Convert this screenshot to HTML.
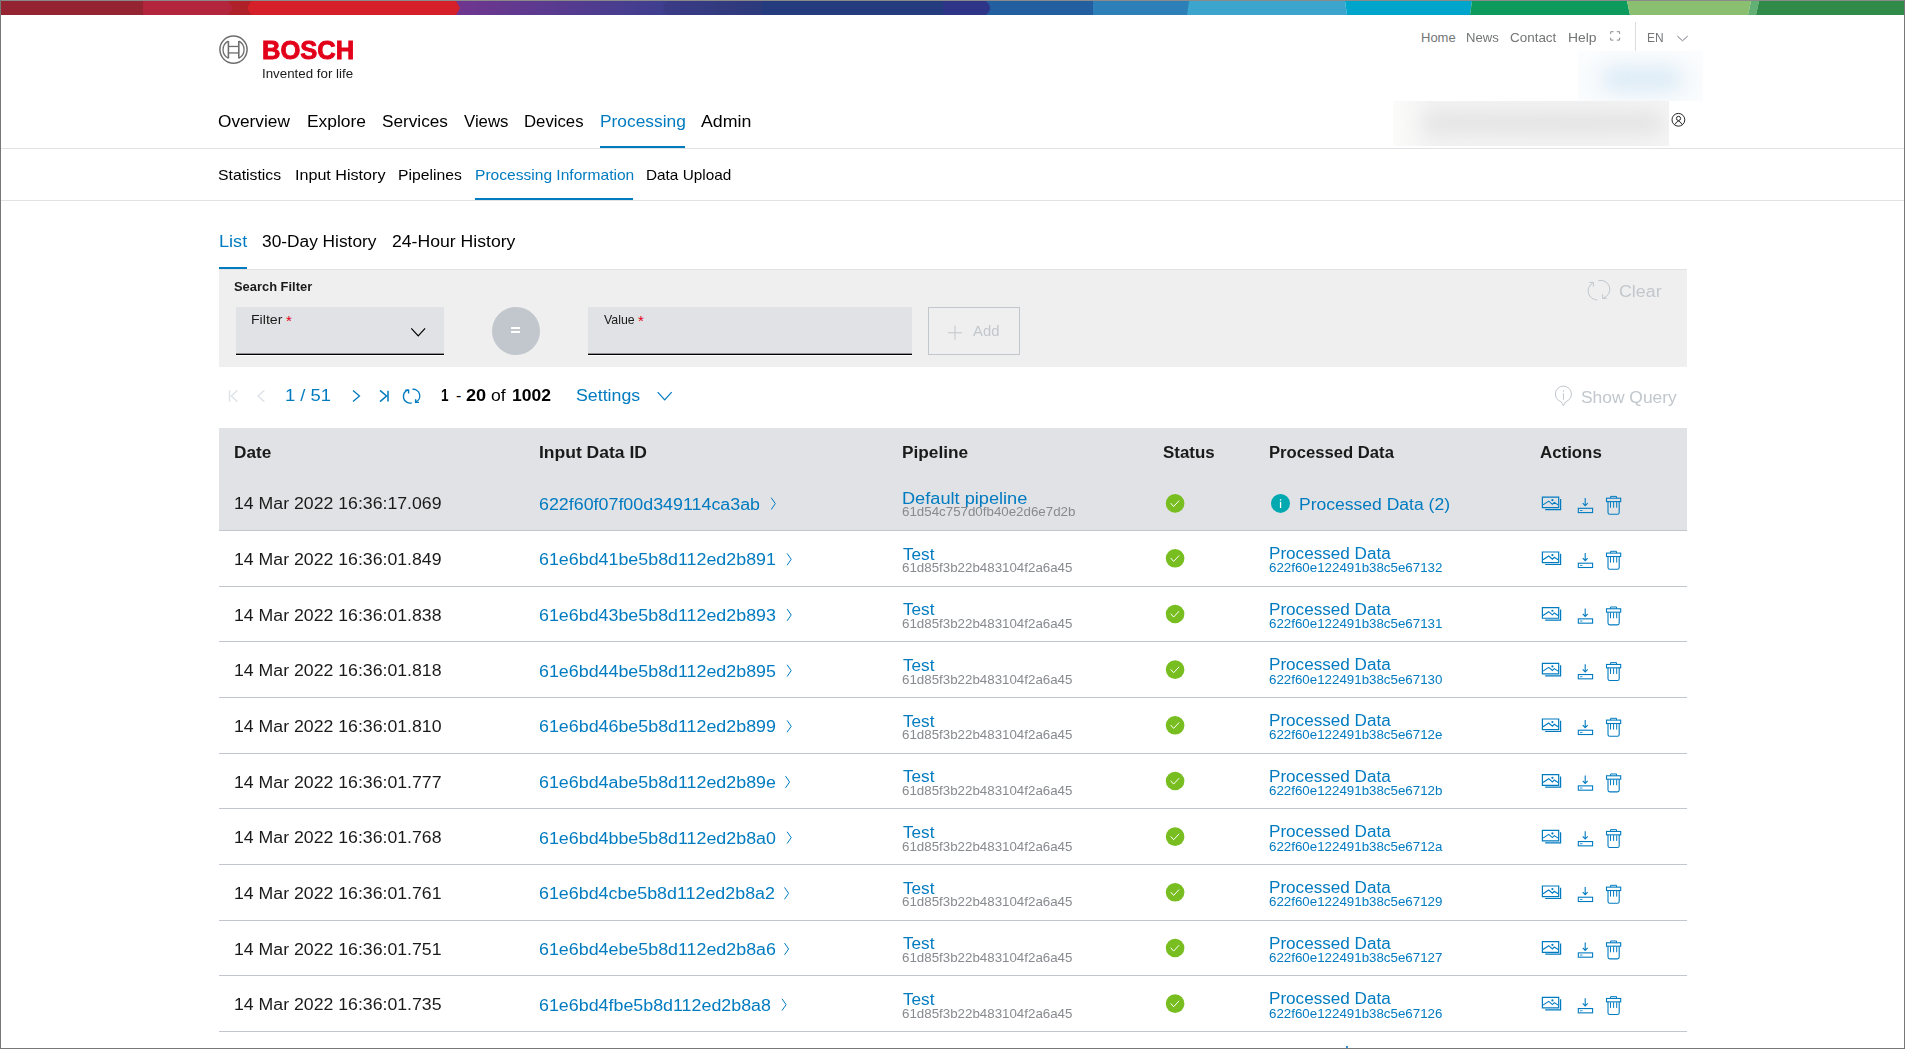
<!DOCTYPE html>
<html><head><meta charset="utf-8">
<style>
html,body{margin:0;padding:0;}html{overflow:hidden;background:#fff;}
body{width:1905px;height:1049px;position:relative;overflow:hidden;background:#fff;font-family:"Liberation Sans",sans-serif;}
.t{position:absolute;white-space:nowrap;font-family:"Liberation Sans",sans-serif;transform-origin:0 0;}
.b{position:absolute;}
svg{position:absolute;overflow:visible;}
</style></head><body>
<!-- color bar -->
<svg style="left:0;top:0" width="1905" height="16" viewBox="0 0 1905 16">
<rect x="0" y="0" width="1905" height="1" fill="#8a8a8a"/>
<defs>
<linearGradient id="gp" x1="0" x2="1"><stop offset="0" stop-color="#71368f"/><stop offset="1" stop-color="#3d3f8f"/></linearGradient>
<linearGradient id="gp2" x1="0" x2="1"><stop offset="0" stop-color="#3b3b86"/><stop offset="1" stop-color="#2c3a7a"/></linearGradient>
</defs>
<g transform="translate(0,1)">
<rect x="0" y="0" width="145" height="14" fill="#952432"/>
<rect x="143" y="0" width="120" height="14" fill="#b02029"/>
<path d="M143 0 H228 L233 7 L228 14 H143 Z" fill="#b2253c"/>
<rect x="450" y="0" width="220" height="14" fill="url(#gp)"/>
<path d="M252 0 Q244 7 252 14 H456 L460 7 L456 0 Z" fill="#d62029"/>
<rect x="760" y="0" width="185" height="14" fill="#243b7e"/>
<path d="M667 0 Q659 7 667 14 H762 V0 Z" fill="url(#gp2)"/>
<rect x="943" y="0" width="151" height="14" fill="#235ea0"/>
<path d="M943 0 H986 Q994 7 986 14 H943 Z" fill="#2e3487"/>
<rect x="1093" y="0" width="96" height="14" fill="#2d7fb7"/>
<path d="M1189 0 H1345 L1347 14 H1187 Z" fill="#3ba5cd"/>
<path d="M1345 0 H1472 L1470 14 H1347 Z" fill="#00a5cc"/>
<path d="M1472 0 H1627 L1630 14 H1470 Z" fill="#0d9b5d"/>
<path d="M1627 0 H1751 L1748 14 H1630 Z" fill="#8bbf70"/>
<path d="M1751 0 H1759 L1756 14 H1748 Z" fill="#62b073"/>
<path d="M1759 0 H1905 V14 H1756 Z" fill="#2f8b47"/>
</g>
</svg>
<!-- page border -->
<div class="b" style="left:0;top:0;width:1px;height:1049px;background:#777"></div>
<div class="b" style="left:1904px;top:0;width:1px;height:1049px;background:#777"></div>
<div class="b" style="left:0;top:1048px;width:1905px;height:1px;background:#777"></div>

<!-- bosch logo -->
<svg style="left:215px;top:31px" width="40" height="38" viewBox="215 31 40 38">
<circle cx="233.5" cy="49.6" r="13.6" fill="none" stroke="#6e6e6e" stroke-width="1.5"/>
<path d="M228.3 41.2 A9.5 9.5 0 0 0 228.3 58.2" fill="none" stroke="#6e6e6e" stroke-width="1.3"/>
<path d="M238.8 41.2 A9.5 9.5 0 0 1 238.8 58.2" fill="none" stroke="#6e6e6e" stroke-width="1.3"/>
<rect x="227.6" y="41" width="1.6" height="17.4" fill="#6e6e6e"/>
<rect x="238" y="41" width="1.6" height="17.4" fill="#6e6e6e"/>
<rect x="228.5" y="45.8" width="10" height="1.3" fill="#6e6e6e"/>
<rect x="228.5" y="52.3" width="10" height="1.3" fill="#6e6e6e"/>
</svg>

<!-- util nav icons -->
<svg style="left:1605px;top:26px" width="20" height="20" viewBox="1605 26 20 20">
<path d="M1610.7 34 V31.7 H1613.5 M1616.8 31.7 H1619.6 V34 M1619.6 37.6 V40.1 H1616.8 M1613.5 40.1 H1610.7 V37.6" fill="none" stroke="#707070" stroke-width="0.8"/>
</svg>
<div class="b" style="left:1635px;top:22px;width:1px;height:29px;background:#dcdcdc"></div>
<svg style="left:1672px;top:30px" width="20" height="16" viewBox="1672 30 20 16">
<path d="M1677.3 36 L1682.5 40.8 L1687.7 36" fill="none" stroke="#71767c" stroke-width="1"/>
</svg>

<!-- blurred blobs -->
<div class="b" style="left:1578px;top:51px;width:125px;height:50px;background:radial-gradient(ellipse at 50% 60%,#f3f8fc 0%,#f8fbfd 60%,#fcfdfe 100%);overflow:hidden">
  <div class="b" style="left:25px;top:17px;width:78px;height:22px;background:#dcebf6;filter:blur(9px);border-radius:11px"></div>
</div>
<div class="b" style="left:1393px;top:101px;width:276px;height:45px;background:linear-gradient(to right,#fbfbfa 0%,#f3f3f3 14%,#f2f2f2 70%,#f4f4f4 100%);overflow:hidden">
  <div class="b" style="left:30px;top:12px;width:240px;height:20px;background:#e3e3e3;filter:blur(9px);border-radius:10px"></div>
</div>
<svg style="left:1668px;top:110px" width="22" height="22" viewBox="1668 110 22 22">
<circle cx="1678.4" cy="119.8" r="6.4" fill="none" stroke="#111" stroke-width="0.9"/>
<circle cx="1678.5" cy="118.4" r="2.1" fill="none" stroke="#111" stroke-width="0.9"/>
<path d="M1675 124.4 Q1676.5 121.4 1678.5 121.1 Q1680.5 121.4 1682 124.4" fill="none" stroke="#111" stroke-width="0.9"/>
</svg>

<!-- nav lines -->
<div class="b" style="left:600px;top:146px;width:85px;height:2px;background:#007bc0"></div>
<div class="b" style="left:1px;top:148px;width:1903px;height:1px;background:#e0e2e5"></div>
<div class="b" style="left:475px;top:198px;width:158px;height:2px;background:#007bc0"></div>
<div class="b" style="left:1px;top:200px;width:1903px;height:1px;background:#e0e2e5"></div>

<!-- tabs underline -->
<div class="b" style="left:219px;top:267px;width:28px;height:2px;background:#007bc0"></div>

<!-- filter panel -->
<div class="b" style="left:219px;top:269px;width:1468px;height:98px;background:#efefef;border-top:1px solid #e2e2e2;box-sizing:border-box"></div>
<div class="b" style="left:236px;top:307px;width:208px;height:46px;background:#e0e2e5"></div>
<svg style="left:0;top:0" width="1905" height="400" viewBox="0 0 1905 400"><rect x="236" y="353" width="208" height="0.6" fill="#eef0f3"/><rect x="236" y="353.6" width="208" height="1.5" fill="#000"/><rect x="236" y="355.1" width="208" height="1" fill="#fff"/><rect x="588" y="353" width="324" height="0.6" fill="#eef0f3"/><rect x="588" y="353.6" width="324" height="1.5" fill="#000"/><rect x="588" y="355.1" width="324" height="1" fill="#fff"/></svg>
<svg style="left:405px;top:322px" width="26" height="20" viewBox="405 322 26 20">
<path d="M411.3 328.3 L418.2 335.8 L425.1 328.3" fill="none" stroke="#000" stroke-width="1.2"/>
</svg>
<div class="b" style="left:492px;top:307px;width:48px;height:48px;border-radius:50%;background:#c1c7cc"></div>
<div class="b" style="left:510.5px;top:327px;width:9.4px;height:2px;background:#fff"></div>
<div class="b" style="left:510.5px;top:331px;width:9.4px;height:2px;background:#fff"></div>
<div class="b" style="left:588px;top:307px;width:324px;height:46px;background:#e0e2e5"></div>
<div class="b" style="left:928px;top:307px;width:92px;height:48px;border:1px solid #c1c7cc;box-sizing:border-box"></div>
<svg style="left:944px;top:322px" width="22" height="22" viewBox="944 322 22 22">
<path d="M948 332.8 H962 M955 325.8 V339.8" fill="none" stroke="#c1c7cc" stroke-width="1"/>
</svg>
<div class="t" style="left:286px;top:313px;font-size:15px;line-height:15px;color:#e20015">*</div>
<div class="t" style="left:638px;top:313px;font-size:15px;line-height:15px;color:#e20015">*</div>
<!-- clear icon -->
<svg style="left:1584px;top:276px" width="28" height="28" viewBox="1584 276 28 28">
<path d="M1597.4 299.9 A9 9 0 0 1 1592.8 283" fill="none" stroke="#c1c7cc" stroke-width="1"/>
<path d="M1589.3 282.4 H1593.4 V286.6" fill="none" stroke="#c1c7cc" stroke-width="1"/>
<path d="M1598.3 280.7 A9 9 0 0 1 1603.3 298" fill="none" stroke="#c1c7cc" stroke-width="1"/>
<path d="M1602.6 294.2 V298.4 H1606.8" fill="none" stroke="#c1c7cc" stroke-width="1"/>
</svg>
<!-- show query icon -->
<svg style="left:1550px;top:382px" width="28" height="28" viewBox="1550 382 28 28">
<path d="M1557.7 399.7 Q1561.8 401.2 1563.4 405.6 Q1565 401.2 1569.1 399.7 A8 8 0 1 0 1557.7 399.7 Z" fill="none" stroke="#c1c7cc" stroke-width="1" stroke-linejoin="round"/>
<path d="M1563.4 390.2 V391.6 M1563.4 393.2 V399.8" fill="none" stroke="#c1c7cc" stroke-width="1"/>
</svg>

<!-- pagination icons -->
<svg style="left:222px;top:384px" width="210" height="24" viewBox="222 384 210 24">
<path d="M229.5 390.3 V401.7 M237.5 390.3 L231.3 396 L237.5 401.7" fill="none" stroke="#dde1e6" stroke-width="1.3"/>
<path d="M264.4 390.3 L258 396 L264.4 401.7" fill="none" stroke="#dde1e6" stroke-width="1.3"/>
<path d="M353 390.4 L359.5 396 L353 401.6" fill="none" stroke="#007bc0" stroke-width="1.3"/>
<path d="M380 390.4 L386.5 396 L380 401.6 M388 390.8 V401.6" fill="none" stroke="#007bc0" stroke-width="1.5"/>
<path d="M408.4 389.8 A6.6 6.6 0 0 0 411.8 402.9" fill="none" stroke="#007bc0" stroke-width="1.4"/>
<path d="M405.3 390.3 H408.6 V393.6" fill="none" stroke="#007bc0" stroke-width="1.4"/>
<path d="M412.5 389.3 A6.6 6.6 0 0 1 415.6 402" fill="none" stroke="#007bc0" stroke-width="1.4"/>
<path d="M415.6 399.2 V402.4 H419" fill="none" stroke="#007bc0" stroke-width="1.4"/>
</svg>
<svg style="left:650px;top:384px" width="28" height="24" viewBox="650 384 28 24">
<path d="M657.7 392.2 L664.7 399.8 L671.7 392.2" fill="none" stroke="#007bc0" stroke-width="1.2"/>
</svg>

<!-- table -->
<div class="b" style="left:219px;top:428px;width:1468px;height:102.5px;background:#e0e2e5"></div>
<div class="b" style="left:219px;top:530.00px;width:1468px;height:1px;background:#c1c7cc"></div>
<div class="b" style="left:219px;top:585.67px;width:1468px;height:1px;background:#c1c7cc"></div>
<div class="b" style="left:219px;top:641.34px;width:1468px;height:1px;background:#c1c7cc"></div>
<div class="b" style="left:219px;top:697.01px;width:1468px;height:1px;background:#c1c7cc"></div>
<div class="b" style="left:219px;top:752.68px;width:1468px;height:1px;background:#c1c7cc"></div>
<div class="b" style="left:219px;top:808.35px;width:1468px;height:1px;background:#c1c7cc"></div>
<div class="b" style="left:219px;top:864.02px;width:1468px;height:1px;background:#c1c7cc"></div>
<div class="b" style="left:219px;top:919.69px;width:1468px;height:1px;background:#c1c7cc"></div>
<div class="b" style="left:219px;top:975.36px;width:1468px;height:1px;background:#c1c7cc"></div>
<div class="b" style="left:219px;top:1031.03px;width:1468px;height:1px;background:#c1c7cc"></div>
<svg style="left:0;top:0" width="1905" height="1049" viewBox="0 0 1905 1049">
<path d="M771.20 497.70 L775.30 503.60 L771.20 509.50" fill="none" stroke="#007bc0" stroke-width="1"/>
<circle cx="1175.1" cy="503.40" r="9.3" fill="#78be20"/>
<path d="M1170.7 503.10 L1173.6 506.50 L1179.1 500.60" fill="none" stroke="#fff" stroke-width="1"/>
<circle cx="1280.5" cy="503.40" r="9.5" fill="#00a8b0"/><rect x="1279.9" y="499.20" width="1.3" height="1.4" fill="#fff"/><rect x="1279.9" y="501.80" width="1.3" height="6.2" fill="#fff"/>
<path d="M1542.4 497.10 H1558.7 V507.70 H1542.4 Z" fill="none" stroke="#007bc0" stroke-width="1.2"/><path d="M1560.6 498.90 V509.60 H1545.2" fill="none" stroke="#007bc0" stroke-width="1.2"/><path d="M1543 504.90 L1548.7 501.10 L1552.4 504.30 L1554.3 502.40 L1558.1 504.90" fill="none" stroke="#007bc0" stroke-width="1.1"/><circle cx="1552.4" cy="500.20" r="1.1" fill="#007bc0"/><path d="M1585.2 498.00 V505.50 M1582.7 503.20 L1585.2 505.80 L1587.7 503.20" fill="none" stroke="#007bc0" stroke-width="1.1"/><rect x="1578.3" y="508.30" width="14.3" height="4.3" fill="none" stroke="#007bc0" stroke-width="1.1"/><path d="M1580 510.50 H1582.5" stroke="#007bc0" stroke-width="0.8"/><rect x="1606.5" y="498.20" width="14.2" height="3.4" fill="none" stroke="#007bc0" stroke-width="1.1"/><path d="M1610.6 498.20 V496.40 H1616.5 V498.20" fill="none" stroke="#007bc0" stroke-width="1"/><path d="M1608 501.60 V512.50 Q1608 514.30 1609.8 514.30 H1617.4 Q1619.2 514.30 1619.2 512.50 V501.60" fill="none" stroke="#007bc0" stroke-width="1.1"/><path d="M1610.5 502.00 V507.70 M1613.6 502.00 V507.70 M1616.7 502.00 V507.70" fill="none" stroke="#007bc0" stroke-width="1"/>
<path d="M787.10 553.40 L791.20 559.30 L787.10 565.20" fill="none" stroke="#007bc0" stroke-width="1"/>
<circle cx="1175.1" cy="558.30" r="9.3" fill="#78be20"/>
<path d="M1170.7 558.00 L1173.6 561.40 L1179.1 555.50" fill="none" stroke="#fff" stroke-width="1"/>
<path d="M1542.4 552.00 H1558.7 V562.60 H1542.4 Z" fill="none" stroke="#007bc0" stroke-width="1.2"/><path d="M1560.6 553.80 V564.50 H1545.2" fill="none" stroke="#007bc0" stroke-width="1.2"/><path d="M1543 559.80 L1548.7 556.00 L1552.4 559.20 L1554.3 557.30 L1558.1 559.80" fill="none" stroke="#007bc0" stroke-width="1.1"/><circle cx="1552.4" cy="555.10" r="1.1" fill="#007bc0"/><path d="M1585.2 552.90 V560.40 M1582.7 558.10 L1585.2 560.70 L1587.7 558.10" fill="none" stroke="#007bc0" stroke-width="1.1"/><rect x="1578.3" y="563.20" width="14.3" height="4.3" fill="none" stroke="#007bc0" stroke-width="1.1"/><path d="M1580 565.40 H1582.5" stroke="#007bc0" stroke-width="0.8"/><rect x="1606.5" y="553.10" width="14.2" height="3.4" fill="none" stroke="#007bc0" stroke-width="1.1"/><path d="M1610.6 553.10 V551.30 H1616.5 V553.10" fill="none" stroke="#007bc0" stroke-width="1"/><path d="M1608 556.50 V567.40 Q1608 569.20 1609.8 569.20 H1617.4 Q1619.2 569.20 1619.2 567.40 V556.50" fill="none" stroke="#007bc0" stroke-width="1.1"/><path d="M1610.5 556.90 V562.60 M1613.6 556.90 V562.60 M1616.7 556.90 V562.60" fill="none" stroke="#007bc0" stroke-width="1"/>
<path d="M787.10 609.07 L791.20 614.97 L787.10 620.87" fill="none" stroke="#007bc0" stroke-width="1"/>
<circle cx="1175.1" cy="613.97" r="9.3" fill="#78be20"/>
<path d="M1170.7 613.67 L1173.6 617.07 L1179.1 611.17" fill="none" stroke="#fff" stroke-width="1"/>
<path d="M1542.4 607.67 H1558.7 V618.27 H1542.4 Z" fill="none" stroke="#007bc0" stroke-width="1.2"/><path d="M1560.6 609.47 V620.17 H1545.2" fill="none" stroke="#007bc0" stroke-width="1.2"/><path d="M1543 615.47 L1548.7 611.67 L1552.4 614.87 L1554.3 612.97 L1558.1 615.47" fill="none" stroke="#007bc0" stroke-width="1.1"/><circle cx="1552.4" cy="610.77" r="1.1" fill="#007bc0"/><path d="M1585.2 608.57 V616.07 M1582.7 613.77 L1585.2 616.37 L1587.7 613.77" fill="none" stroke="#007bc0" stroke-width="1.1"/><rect x="1578.3" y="618.87" width="14.3" height="4.3" fill="none" stroke="#007bc0" stroke-width="1.1"/><path d="M1580 621.07 H1582.5" stroke="#007bc0" stroke-width="0.8"/><rect x="1606.5" y="608.77" width="14.2" height="3.4" fill="none" stroke="#007bc0" stroke-width="1.1"/><path d="M1610.6 608.77 V606.97 H1616.5 V608.77" fill="none" stroke="#007bc0" stroke-width="1"/><path d="M1608 612.17 V623.07 Q1608 624.87 1609.8 624.87 H1617.4 Q1619.2 624.87 1619.2 623.07 V612.17" fill="none" stroke="#007bc0" stroke-width="1.1"/><path d="M1610.5 612.57 V618.27 M1613.6 612.57 V618.27 M1616.7 612.57 V618.27" fill="none" stroke="#007bc0" stroke-width="1"/>
<path d="M787.10 664.74 L791.20 670.64 L787.10 676.54" fill="none" stroke="#007bc0" stroke-width="1"/>
<circle cx="1175.1" cy="669.64" r="9.3" fill="#78be20"/>
<path d="M1170.7 669.34 L1173.6 672.74 L1179.1 666.84" fill="none" stroke="#fff" stroke-width="1"/>
<path d="M1542.4 663.34 H1558.7 V673.94 H1542.4 Z" fill="none" stroke="#007bc0" stroke-width="1.2"/><path d="M1560.6 665.14 V675.84 H1545.2" fill="none" stroke="#007bc0" stroke-width="1.2"/><path d="M1543 671.14 L1548.7 667.34 L1552.4 670.54 L1554.3 668.64 L1558.1 671.14" fill="none" stroke="#007bc0" stroke-width="1.1"/><circle cx="1552.4" cy="666.44" r="1.1" fill="#007bc0"/><path d="M1585.2 664.24 V671.74 M1582.7 669.44 L1585.2 672.04 L1587.7 669.44" fill="none" stroke="#007bc0" stroke-width="1.1"/><rect x="1578.3" y="674.54" width="14.3" height="4.3" fill="none" stroke="#007bc0" stroke-width="1.1"/><path d="M1580 676.74 H1582.5" stroke="#007bc0" stroke-width="0.8"/><rect x="1606.5" y="664.44" width="14.2" height="3.4" fill="none" stroke="#007bc0" stroke-width="1.1"/><path d="M1610.6 664.44 V662.64 H1616.5 V664.44" fill="none" stroke="#007bc0" stroke-width="1"/><path d="M1608 667.84 V678.74 Q1608 680.54 1609.8 680.54 H1617.4 Q1619.2 680.54 1619.2 678.74 V667.84" fill="none" stroke="#007bc0" stroke-width="1.1"/><path d="M1610.5 668.24 V673.94 M1613.6 668.24 V673.94 M1616.7 668.24 V673.94" fill="none" stroke="#007bc0" stroke-width="1"/>
<path d="M787.10 720.41 L791.20 726.31 L787.10 732.21" fill="none" stroke="#007bc0" stroke-width="1"/>
<circle cx="1175.1" cy="725.31" r="9.3" fill="#78be20"/>
<path d="M1170.7 725.01 L1173.6 728.41 L1179.1 722.51" fill="none" stroke="#fff" stroke-width="1"/>
<path d="M1542.4 719.01 H1558.7 V729.61 H1542.4 Z" fill="none" stroke="#007bc0" stroke-width="1.2"/><path d="M1560.6 720.81 V731.51 H1545.2" fill="none" stroke="#007bc0" stroke-width="1.2"/><path d="M1543 726.81 L1548.7 723.01 L1552.4 726.21 L1554.3 724.31 L1558.1 726.81" fill="none" stroke="#007bc0" stroke-width="1.1"/><circle cx="1552.4" cy="722.11" r="1.1" fill="#007bc0"/><path d="M1585.2 719.91 V727.41 M1582.7 725.11 L1585.2 727.71 L1587.7 725.11" fill="none" stroke="#007bc0" stroke-width="1.1"/><rect x="1578.3" y="730.21" width="14.3" height="4.3" fill="none" stroke="#007bc0" stroke-width="1.1"/><path d="M1580 732.41 H1582.5" stroke="#007bc0" stroke-width="0.8"/><rect x="1606.5" y="720.11" width="14.2" height="3.4" fill="none" stroke="#007bc0" stroke-width="1.1"/><path d="M1610.6 720.11 V718.31 H1616.5 V720.11" fill="none" stroke="#007bc0" stroke-width="1"/><path d="M1608 723.51 V734.41 Q1608 736.21 1609.8 736.21 H1617.4 Q1619.2 736.21 1619.2 734.41 V723.51" fill="none" stroke="#007bc0" stroke-width="1.1"/><path d="M1610.5 723.91 V729.61 M1613.6 723.91 V729.61 M1616.7 723.91 V729.61" fill="none" stroke="#007bc0" stroke-width="1"/>
<path d="M785.50 776.08 L789.60 781.98 L785.50 787.88" fill="none" stroke="#007bc0" stroke-width="1"/>
<circle cx="1175.1" cy="780.98" r="9.3" fill="#78be20"/>
<path d="M1170.7 780.68 L1173.6 784.08 L1179.1 778.18" fill="none" stroke="#fff" stroke-width="1"/>
<path d="M1542.4 774.68 H1558.7 V785.28 H1542.4 Z" fill="none" stroke="#007bc0" stroke-width="1.2"/><path d="M1560.6 776.48 V787.18 H1545.2" fill="none" stroke="#007bc0" stroke-width="1.2"/><path d="M1543 782.48 L1548.7 778.68 L1552.4 781.88 L1554.3 779.98 L1558.1 782.48" fill="none" stroke="#007bc0" stroke-width="1.1"/><circle cx="1552.4" cy="777.78" r="1.1" fill="#007bc0"/><path d="M1585.2 775.58 V783.08 M1582.7 780.78 L1585.2 783.38 L1587.7 780.78" fill="none" stroke="#007bc0" stroke-width="1.1"/><rect x="1578.3" y="785.88" width="14.3" height="4.3" fill="none" stroke="#007bc0" stroke-width="1.1"/><path d="M1580 788.08 H1582.5" stroke="#007bc0" stroke-width="0.8"/><rect x="1606.5" y="775.78" width="14.2" height="3.4" fill="none" stroke="#007bc0" stroke-width="1.1"/><path d="M1610.6 775.78 V773.98 H1616.5 V775.78" fill="none" stroke="#007bc0" stroke-width="1"/><path d="M1608 779.18 V790.08 Q1608 791.88 1609.8 791.88 H1617.4 Q1619.2 791.88 1619.2 790.08 V779.18" fill="none" stroke="#007bc0" stroke-width="1.1"/><path d="M1610.5 779.58 V785.28 M1613.6 779.58 V785.28 M1616.7 779.58 V785.28" fill="none" stroke="#007bc0" stroke-width="1"/>
<path d="M787.10 831.75 L791.20 837.65 L787.10 843.55" fill="none" stroke="#007bc0" stroke-width="1"/>
<circle cx="1175.1" cy="836.65" r="9.3" fill="#78be20"/>
<path d="M1170.7 836.35 L1173.6 839.75 L1179.1 833.85" fill="none" stroke="#fff" stroke-width="1"/>
<path d="M1542.4 830.35 H1558.7 V840.95 H1542.4 Z" fill="none" stroke="#007bc0" stroke-width="1.2"/><path d="M1560.6 832.15 V842.85 H1545.2" fill="none" stroke="#007bc0" stroke-width="1.2"/><path d="M1543 838.15 L1548.7 834.35 L1552.4 837.55 L1554.3 835.65 L1558.1 838.15" fill="none" stroke="#007bc0" stroke-width="1.1"/><circle cx="1552.4" cy="833.45" r="1.1" fill="#007bc0"/><path d="M1585.2 831.25 V838.75 M1582.7 836.45 L1585.2 839.05 L1587.7 836.45" fill="none" stroke="#007bc0" stroke-width="1.1"/><rect x="1578.3" y="841.55" width="14.3" height="4.3" fill="none" stroke="#007bc0" stroke-width="1.1"/><path d="M1580 843.75 H1582.5" stroke="#007bc0" stroke-width="0.8"/><rect x="1606.5" y="831.45" width="14.2" height="3.4" fill="none" stroke="#007bc0" stroke-width="1.1"/><path d="M1610.6 831.45 V829.65 H1616.5 V831.45" fill="none" stroke="#007bc0" stroke-width="1"/><path d="M1608 834.85 V845.75 Q1608 847.55 1609.8 847.55 H1617.4 Q1619.2 847.55 1619.2 845.75 V834.85" fill="none" stroke="#007bc0" stroke-width="1.1"/><path d="M1610.5 835.25 V840.95 M1613.6 835.25 V840.95 M1616.7 835.25 V840.95" fill="none" stroke="#007bc0" stroke-width="1"/>
<path d="M784.50 887.42 L788.60 893.32 L784.50 899.22" fill="none" stroke="#007bc0" stroke-width="1"/>
<circle cx="1175.1" cy="892.32" r="9.3" fill="#78be20"/>
<path d="M1170.7 892.02 L1173.6 895.42 L1179.1 889.52" fill="none" stroke="#fff" stroke-width="1"/>
<path d="M1542.4 886.02 H1558.7 V896.62 H1542.4 Z" fill="none" stroke="#007bc0" stroke-width="1.2"/><path d="M1560.6 887.82 V898.52 H1545.2" fill="none" stroke="#007bc0" stroke-width="1.2"/><path d="M1543 893.82 L1548.7 890.02 L1552.4 893.22 L1554.3 891.32 L1558.1 893.82" fill="none" stroke="#007bc0" stroke-width="1.1"/><circle cx="1552.4" cy="889.12" r="1.1" fill="#007bc0"/><path d="M1585.2 886.92 V894.42 M1582.7 892.12 L1585.2 894.72 L1587.7 892.12" fill="none" stroke="#007bc0" stroke-width="1.1"/><rect x="1578.3" y="897.22" width="14.3" height="4.3" fill="none" stroke="#007bc0" stroke-width="1.1"/><path d="M1580 899.42 H1582.5" stroke="#007bc0" stroke-width="0.8"/><rect x="1606.5" y="887.12" width="14.2" height="3.4" fill="none" stroke="#007bc0" stroke-width="1.1"/><path d="M1610.6 887.12 V885.32 H1616.5 V887.12" fill="none" stroke="#007bc0" stroke-width="1"/><path d="M1608 890.52 V901.42 Q1608 903.22 1609.8 903.22 H1617.4 Q1619.2 903.22 1619.2 901.42 V890.52" fill="none" stroke="#007bc0" stroke-width="1.1"/><path d="M1610.5 890.92 V896.62 M1613.6 890.92 V896.62 M1616.7 890.92 V896.62" fill="none" stroke="#007bc0" stroke-width="1"/>
<path d="M784.50 943.09 L788.60 948.99 L784.50 954.89" fill="none" stroke="#007bc0" stroke-width="1"/>
<circle cx="1175.1" cy="947.99" r="9.3" fill="#78be20"/>
<path d="M1170.7 947.69 L1173.6 951.09 L1179.1 945.19" fill="none" stroke="#fff" stroke-width="1"/>
<path d="M1542.4 941.69 H1558.7 V952.29 H1542.4 Z" fill="none" stroke="#007bc0" stroke-width="1.2"/><path d="M1560.6 943.49 V954.19 H1545.2" fill="none" stroke="#007bc0" stroke-width="1.2"/><path d="M1543 949.49 L1548.7 945.69 L1552.4 948.89 L1554.3 946.99 L1558.1 949.49" fill="none" stroke="#007bc0" stroke-width="1.1"/><circle cx="1552.4" cy="944.79" r="1.1" fill="#007bc0"/><path d="M1585.2 942.59 V950.09 M1582.7 947.79 L1585.2 950.39 L1587.7 947.79" fill="none" stroke="#007bc0" stroke-width="1.1"/><rect x="1578.3" y="952.89" width="14.3" height="4.3" fill="none" stroke="#007bc0" stroke-width="1.1"/><path d="M1580 955.09 H1582.5" stroke="#007bc0" stroke-width="0.8"/><rect x="1606.5" y="942.79" width="14.2" height="3.4" fill="none" stroke="#007bc0" stroke-width="1.1"/><path d="M1610.6 942.79 V940.99 H1616.5 V942.79" fill="none" stroke="#007bc0" stroke-width="1"/><path d="M1608 946.19 V957.09 Q1608 958.89 1609.8 958.89 H1617.4 Q1619.2 958.89 1619.2 957.09 V946.19" fill="none" stroke="#007bc0" stroke-width="1.1"/><path d="M1610.5 946.59 V952.29 M1613.6 946.59 V952.29 M1616.7 946.59 V952.29" fill="none" stroke="#007bc0" stroke-width="1"/>
<path d="M782.00 998.76 L786.10 1004.66 L782.00 1010.56" fill="none" stroke="#007bc0" stroke-width="1"/>
<circle cx="1175.1" cy="1003.66" r="9.3" fill="#78be20"/>
<path d="M1170.7 1003.36 L1173.6 1006.76 L1179.1 1000.86" fill="none" stroke="#fff" stroke-width="1"/>
<path d="M1542.4 997.36 H1558.7 V1007.96 H1542.4 Z" fill="none" stroke="#007bc0" stroke-width="1.2"/><path d="M1560.6 999.16 V1009.86 H1545.2" fill="none" stroke="#007bc0" stroke-width="1.2"/><path d="M1543 1005.16 L1548.7 1001.36 L1552.4 1004.56 L1554.3 1002.66 L1558.1 1005.16" fill="none" stroke="#007bc0" stroke-width="1.1"/><circle cx="1552.4" cy="1000.46" r="1.1" fill="#007bc0"/><path d="M1585.2 998.26 V1005.76 M1582.7 1003.46 L1585.2 1006.06 L1587.7 1003.46" fill="none" stroke="#007bc0" stroke-width="1.1"/><rect x="1578.3" y="1008.56" width="14.3" height="4.3" fill="none" stroke="#007bc0" stroke-width="1.1"/><path d="M1580 1010.76 H1582.5" stroke="#007bc0" stroke-width="0.8"/><rect x="1606.5" y="998.46" width="14.2" height="3.4" fill="none" stroke="#007bc0" stroke-width="1.1"/><path d="M1610.6 998.46 V996.66 H1616.5 V998.46" fill="none" stroke="#007bc0" stroke-width="1"/><path d="M1608 1001.86 V1012.76 Q1608 1014.56 1609.8 1014.56 H1617.4 Q1619.2 1014.56 1619.2 1012.76 V1001.86" fill="none" stroke="#007bc0" stroke-width="1.1"/><path d="M1610.5 1002.26 V1007.96 M1613.6 1002.26 V1007.96 M1616.7 1002.26 V1007.96" fill="none" stroke="#007bc0" stroke-width="1"/>
</svg>
<div class="t" style="left:261.85px;top:40px;font-size:26.2px;line-height:20px;font-weight:700;color:#e2001a;-webkit-text-stroke:0.9px #e2001a;transform:scaleX(0.9758)">BOSCH</div>
<div class="t" style="left:262.26px;top:64px;font-size:12.8px;line-height:20px;font-weight:400;color:#1a1a1a;transform:scaleX(1.0407)">Invented for life</div>
<div class="t" style="left:1421.00px;top:28px;font-size:13px;line-height:20px;font-weight:400;color:#737576;transform:scaleX(1.0000)">Home</div>
<div class="t" style="left:1466.49px;top:28px;font-size:13px;line-height:20px;font-weight:400;color:#737576;transform:scaleX(1.0097)">News</div>
<div class="t" style="left:1510.27px;top:28px;font-size:13px;line-height:20px;font-weight:400;color:#737576;transform:scaleX(1.0341)">Contact</div>
<div class="t" style="left:1568.23px;top:28px;font-size:13px;line-height:20px;font-weight:400;color:#737576;transform:scaleX(1.0680)">Help</div>
<div class="t" style="left:1647.38px;top:28px;font-size:13px;line-height:20px;font-weight:400;color:#737576;transform:scaleX(0.9187)">EN</div>
<div class="t" style="left:218.12px;top:112px;font-size:16px;line-height:20px;font-weight:400;color:#000000;transform:scaleX(1.0773)">Overview</div>
<div class="t" style="left:306.81px;top:112px;font-size:16px;line-height:20px;font-weight:400;color:#000000;transform:scaleX(1.0868)">Explore</div>
<div class="t" style="left:381.53px;top:112px;font-size:16px;line-height:20px;font-weight:400;color:#000000;transform:scaleX(1.0750)">Services</div>
<div class="t" style="left:464.00px;top:112px;font-size:16px;line-height:20px;font-weight:400;color:#000000;transform:scaleX(1.0476)">Views</div>
<div class="t" style="left:524.35px;top:112px;font-size:16px;line-height:20px;font-weight:400;color:#000000;transform:scaleX(1.0464)">Devices</div>
<div class="t" style="left:600.42px;top:112px;font-size:16px;line-height:20px;font-weight:400;color:#007bc0;transform:scaleX(1.0844)">Processing</div>
<div class="t" style="left:701.20px;top:112px;font-size:16px;line-height:20px;font-weight:400;color:#000000;transform:scaleX(1.1091)">Admin</div>
<div class="t" style="left:218.11px;top:165px;font-size:14.5px;line-height:20px;font-weight:400;color:#000000;transform:scaleX(1.0877)">Statistics</div>
<div class="t" style="left:294.89px;top:165px;font-size:14.5px;line-height:20px;font-weight:400;color:#000000;transform:scaleX(1.1113)">Input History</div>
<div class="t" style="left:397.92px;top:165px;font-size:14.5px;line-height:20px;font-weight:400;color:#000000;transform:scaleX(1.0842)">Pipelines</div>
<div class="t" style="left:474.53px;top:165px;font-size:14.5px;line-height:20px;font-weight:400;color:#007bc0;transform:scaleX(1.0740)">Processing Information</div>
<div class="t" style="left:646.14px;top:165px;font-size:14.5px;line-height:20px;font-weight:400;color:#000000;transform:scaleX(1.0570)">Data Upload</div>
<div class="t" style="left:218.67px;top:232px;font-size:16px;line-height:20px;font-weight:400;color:#007bc0;transform:scaleX(1.1333)">List</div>
<div class="t" style="left:261.92px;top:232px;font-size:16px;line-height:20px;font-weight:400;color:#000000;transform:scaleX(1.0819)">30-Day History</div>
<div class="t" style="left:392.30px;top:232px;font-size:16px;line-height:20px;font-weight:400;color:#000000;transform:scaleX(1.1018)">24-Hour History</div>
<div class="t" style="left:233.61px;top:277px;font-size:13px;line-height:20px;font-weight:700;color:#1a1a1a;transform:scaleX(0.9923)">Search Filter</div>
<div class="t" style="left:251.21px;top:310px;font-size:13px;line-height:20px;font-weight:400;color:#1a1a1a;transform:scaleX(1.0857)">Filter</div>
<div class="t" style="left:603.90px;top:310px;font-size:13px;line-height:20px;font-weight:400;color:#1a1a1a;transform:scaleX(0.9500)">Value</div>
<div class="t" style="left:973.00px;top:321px;font-size:15px;line-height:20px;font-weight:400;color:#c1c7cc;transform:scaleX(0.9885)">Add</div>
<div class="t" style="left:1618.69px;top:282px;font-size:16px;line-height:20px;font-weight:400;color:#c1c7cc;transform:scaleX(1.1135)">Clear</div>
<div class="t" style="left:1580.51px;top:388px;font-size:16px;line-height:20px;font-weight:400;color:#c1c7cc;transform:scaleX(1.0874)">Show Query</div>
<div class="t" style="left:284.75px;top:386px;font-size:16px;line-height:20px;font-weight:400;color:#007bc0;transform:scaleX(1.1500)">1 / 51</div>
<div class="t" style="left:576.19px;top:386px;font-size:16px;line-height:20px;font-weight:400;color:#007bc0;transform:scaleX(1.1107)">Settings</div>
<div class="t" style="left:441.45px;top:386px;font-size:16px;line-height:20px;font-weight:700;color:#000000;transform:scaleX(0.8500)">1</div>
<div class="t" style="left:456.00px;top:386px;font-size:16px;line-height:20px;font-weight:400;color:#000000;transform:scaleX(1.0000)">-</div>
<div class="t" style="left:465.77px;top:386px;font-size:16px;line-height:20px;font-weight:700;color:#000000;transform:scaleX(1.1313)">20</div>
<div class="t" style="left:490.70px;top:386px;font-size:16px;line-height:20px;font-weight:400;color:#000000;transform:scaleX(1.1000)">of</div>
<div class="t" style="left:511.51px;top:386px;font-size:16px;line-height:20px;font-weight:700;color:#000000;transform:scaleX(1.0941)">1002</div>
<div class="t" style="left:234.33px;top:443px;font-size:16px;line-height:20px;font-weight:700;color:#1a1a1a;transform:scaleX(1.0727)">Date</div>
<div class="t" style="left:539.21px;top:443px;font-size:16px;line-height:20px;font-weight:700;color:#1a1a1a;transform:scaleX(1.0938)">Input Data ID</div>
<div class="t" style="left:901.82px;top:443px;font-size:16px;line-height:20px;font-weight:700;color:#1a1a1a;transform:scaleX(1.0767)">Pipeline</div>
<div class="t" style="left:1163.34px;top:443px;font-size:16px;line-height:20px;font-weight:700;color:#1a1a1a;transform:scaleX(1.0553)">Status</div>
<div class="t" style="left:1268.66px;top:443px;font-size:16px;line-height:20px;font-weight:700;color:#1a1a1a;transform:scaleX(1.0403)">Processed Data</div>
<div class="t" style="left:1539.55px;top:443px;font-size:16px;line-height:20px;font-weight:700;color:#1a1a1a;transform:scaleX(1.0526)">Actions</div>
<div class="t" style="left:234.29px;top:494px;font-size:16px;line-height:20px;font-weight:400;color:#1a1a1a;transform:scaleX(1.1054)">14 Mar 2022 16:36:17.069</div>
<div class="t" style="left:539.18px;top:495px;font-size:16px;line-height:20px;font-weight:400;color:#007bc0;transform:scaleX(1.1156)">622f60f07f00d349114ca3ab</div>
<div class="t" style="left:901.76px;top:489px;font-size:16px;line-height:20px;font-weight:400;color:#007bc0;transform:scaleX(1.1358)">Default pipeline</div>
<div class="t" style="left:901.88px;top:502px;font-size:13px;line-height:20px;font-weight:400;color:#878a8e;transform:scaleX(1.0250)">61d54c757d0fb40e2d6e7d2b</div>
<div class="t" style="left:1299.30px;top:495px;font-size:16px;line-height:20px;font-weight:400;color:#007bc0;transform:scaleX(1.0956)">Processed Data (2)</div>
<div class="t" style="left:234.29px;top:550px;font-size:16px;line-height:20px;font-weight:400;color:#1a1a1a;transform:scaleX(1.1054)">14 Mar 2022 16:36:01.849</div>
<div class="t" style="left:539.18px;top:550px;font-size:16px;line-height:20px;font-weight:400;color:#007bc0;transform:scaleX(1.1156)">61e6bd41be5b8d112ed2b891</div>
<div class="t" style="left:902.90px;top:545px;font-size:16px;line-height:20px;font-weight:400;color:#007bc0;transform:scaleX(1.0724)">Test</div>
<div class="t" style="left:901.88px;top:558px;font-size:13px;line-height:20px;font-weight:400;color:#878a8e;transform:scaleX(1.0250)">61d85f3b22b483104f2a6a45</div>
<div class="t" style="left:1268.63px;top:544px;font-size:16px;line-height:20px;font-weight:400;color:#007bc0;transform:scaleX(1.0690)">Processed Data</div>
<div class="t" style="left:1268.67px;top:558px;font-size:13px;line-height:20px;font-weight:400;color:#007bc0;transform:scaleX(1.0250)">622f60e122491b38c5e67132</div>
<div class="t" style="left:234.29px;top:606px;font-size:16px;line-height:20px;font-weight:400;color:#1a1a1a;transform:scaleX(1.1054)">14 Mar 2022 16:36:01.838</div>
<div class="t" style="left:539.18px;top:606px;font-size:16px;line-height:20px;font-weight:400;color:#007bc0;transform:scaleX(1.1156)">61e6bd43be5b8d112ed2b893</div>
<div class="t" style="left:902.90px;top:600px;font-size:16px;line-height:20px;font-weight:400;color:#007bc0;transform:scaleX(1.0724)">Test</div>
<div class="t" style="left:901.88px;top:614px;font-size:13px;line-height:20px;font-weight:400;color:#878a8e;transform:scaleX(1.0250)">61d85f3b22b483104f2a6a45</div>
<div class="t" style="left:1268.63px;top:600px;font-size:16px;line-height:20px;font-weight:400;color:#007bc0;transform:scaleX(1.0690)">Processed Data</div>
<div class="t" style="left:1268.67px;top:614px;font-size:13px;line-height:20px;font-weight:400;color:#007bc0;transform:scaleX(1.0250)">622f60e122491b38c5e67131</div>
<div class="t" style="left:234.29px;top:661px;font-size:16px;line-height:20px;font-weight:400;color:#1a1a1a;transform:scaleX(1.1054)">14 Mar 2022 16:36:01.818</div>
<div class="t" style="left:539.18px;top:662px;font-size:16px;line-height:20px;font-weight:400;color:#007bc0;transform:scaleX(1.1156)">61e6bd44be5b8d112ed2b895</div>
<div class="t" style="left:902.90px;top:656px;font-size:16px;line-height:20px;font-weight:400;color:#007bc0;transform:scaleX(1.0724)">Test</div>
<div class="t" style="left:901.88px;top:670px;font-size:13px;line-height:20px;font-weight:400;color:#878a8e;transform:scaleX(1.0250)">61d85f3b22b483104f2a6a45</div>
<div class="t" style="left:1268.63px;top:655px;font-size:16px;line-height:20px;font-weight:400;color:#007bc0;transform:scaleX(1.0690)">Processed Data</div>
<div class="t" style="left:1268.67px;top:670px;font-size:13px;line-height:20px;font-weight:400;color:#007bc0;transform:scaleX(1.0250)">622f60e122491b38c5e67130</div>
<div class="t" style="left:234.29px;top:717px;font-size:16px;line-height:20px;font-weight:400;color:#1a1a1a;transform:scaleX(1.1054)">14 Mar 2022 16:36:01.810</div>
<div class="t" style="left:539.18px;top:717px;font-size:16px;line-height:20px;font-weight:400;color:#007bc0;transform:scaleX(1.1156)">61e6bd46be5b8d112ed2b899</div>
<div class="t" style="left:902.90px;top:712px;font-size:16px;line-height:20px;font-weight:400;color:#007bc0;transform:scaleX(1.0724)">Test</div>
<div class="t" style="left:901.88px;top:725px;font-size:13px;line-height:20px;font-weight:400;color:#878a8e;transform:scaleX(1.0250)">61d85f3b22b483104f2a6a45</div>
<div class="t" style="left:1268.63px;top:711px;font-size:16px;line-height:20px;font-weight:400;color:#007bc0;transform:scaleX(1.0690)">Processed Data</div>
<div class="t" style="left:1268.67px;top:725px;font-size:13px;line-height:20px;font-weight:400;color:#007bc0;transform:scaleX(1.0250)">622f60e122491b38c5e6712e</div>
<div class="t" style="left:234.29px;top:773px;font-size:16px;line-height:20px;font-weight:400;color:#1a1a1a;transform:scaleX(1.1054)">14 Mar 2022 16:36:01.777</div>
<div class="t" style="left:539.18px;top:773px;font-size:16px;line-height:20px;font-weight:400;color:#007bc0;transform:scaleX(1.1156)">61e6bd4abe5b8d112ed2b89e</div>
<div class="t" style="left:902.90px;top:767px;font-size:16px;line-height:20px;font-weight:400;color:#007bc0;transform:scaleX(1.0724)">Test</div>
<div class="t" style="left:901.88px;top:781px;font-size:13px;line-height:20px;font-weight:400;color:#878a8e;transform:scaleX(1.0250)">61d85f3b22b483104f2a6a45</div>
<div class="t" style="left:1268.63px;top:767px;font-size:16px;line-height:20px;font-weight:400;color:#007bc0;transform:scaleX(1.0690)">Processed Data</div>
<div class="t" style="left:1268.67px;top:781px;font-size:13px;line-height:20px;font-weight:400;color:#007bc0;transform:scaleX(1.0250)">622f60e122491b38c5e6712b</div>
<div class="t" style="left:234.29px;top:828px;font-size:16px;line-height:20px;font-weight:400;color:#1a1a1a;transform:scaleX(1.1054)">14 Mar 2022 16:36:01.768</div>
<div class="t" style="left:539.18px;top:829px;font-size:16px;line-height:20px;font-weight:400;color:#007bc0;transform:scaleX(1.1156)">61e6bd4bbe5b8d112ed2b8a0</div>
<div class="t" style="left:902.90px;top:823px;font-size:16px;line-height:20px;font-weight:400;color:#007bc0;transform:scaleX(1.0724)">Test</div>
<div class="t" style="left:901.88px;top:837px;font-size:13px;line-height:20px;font-weight:400;color:#878a8e;transform:scaleX(1.0250)">61d85f3b22b483104f2a6a45</div>
<div class="t" style="left:1268.63px;top:822px;font-size:16px;line-height:20px;font-weight:400;color:#007bc0;transform:scaleX(1.0690)">Processed Data</div>
<div class="t" style="left:1268.67px;top:837px;font-size:13px;line-height:20px;font-weight:400;color:#007bc0;transform:scaleX(1.0250)">622f60e122491b38c5e6712a</div>
<div class="t" style="left:234.29px;top:884px;font-size:16px;line-height:20px;font-weight:400;color:#1a1a1a;transform:scaleX(1.1054)">14 Mar 2022 16:36:01.761</div>
<div class="t" style="left:539.18px;top:884px;font-size:16px;line-height:20px;font-weight:400;color:#007bc0;transform:scaleX(1.1156)">61e6bd4cbe5b8d112ed2b8a2</div>
<div class="t" style="left:902.90px;top:879px;font-size:16px;line-height:20px;font-weight:400;color:#007bc0;transform:scaleX(1.0724)">Test</div>
<div class="t" style="left:901.88px;top:892px;font-size:13px;line-height:20px;font-weight:400;color:#878a8e;transform:scaleX(1.0250)">61d85f3b22b483104f2a6a45</div>
<div class="t" style="left:1268.63px;top:878px;font-size:16px;line-height:20px;font-weight:400;color:#007bc0;transform:scaleX(1.0690)">Processed Data</div>
<div class="t" style="left:1268.67px;top:892px;font-size:13px;line-height:20px;font-weight:400;color:#007bc0;transform:scaleX(1.0250)">622f60e122491b38c5e67129</div>
<div class="t" style="left:234.29px;top:940px;font-size:16px;line-height:20px;font-weight:400;color:#1a1a1a;transform:scaleX(1.1054)">14 Mar 2022 16:36:01.751</div>
<div class="t" style="left:539.18px;top:940px;font-size:16px;line-height:20px;font-weight:400;color:#007bc0;transform:scaleX(1.1156)">61e6bd4ebe5b8d112ed2b8a6</div>
<div class="t" style="left:902.90px;top:934px;font-size:16px;line-height:20px;font-weight:400;color:#007bc0;transform:scaleX(1.0724)">Test</div>
<div class="t" style="left:901.88px;top:948px;font-size:13px;line-height:20px;font-weight:400;color:#878a8e;transform:scaleX(1.0250)">61d85f3b22b483104f2a6a45</div>
<div class="t" style="left:1268.63px;top:934px;font-size:16px;line-height:20px;font-weight:400;color:#007bc0;transform:scaleX(1.0690)">Processed Data</div>
<div class="t" style="left:1268.67px;top:948px;font-size:13px;line-height:20px;font-weight:400;color:#007bc0;transform:scaleX(1.0250)">622f60e122491b38c5e67127</div>
<div class="t" style="left:234.29px;top:995px;font-size:16px;line-height:20px;font-weight:400;color:#1a1a1a;transform:scaleX(1.1054)">14 Mar 2022 16:36:01.735</div>
<div class="t" style="left:539.18px;top:996px;font-size:16px;line-height:20px;font-weight:400;color:#007bc0;transform:scaleX(1.1156)">61e6bd4fbe5b8d112ed2b8a8</div>
<div class="t" style="left:902.90px;top:990px;font-size:16px;line-height:20px;font-weight:400;color:#007bc0;transform:scaleX(1.0724)">Test</div>
<div class="t" style="left:901.88px;top:1004px;font-size:13px;line-height:20px;font-weight:400;color:#878a8e;transform:scaleX(1.0250)">61d85f3b22b483104f2a6a45</div>
<div class="t" style="left:1268.63px;top:989px;font-size:16px;line-height:20px;font-weight:400;color:#007bc0;transform:scaleX(1.0690)">Processed Data</div>
<div class="t" style="left:1268.67px;top:1004px;font-size:13px;line-height:20px;font-weight:400;color:#007bc0;transform:scaleX(1.0250)">622f60e122491b38c5e67126</div>
<div class="b" style="left:1346px;top:1046px;width:2px;height:2px;background:#3c8fd0"></div>
</body></html>
